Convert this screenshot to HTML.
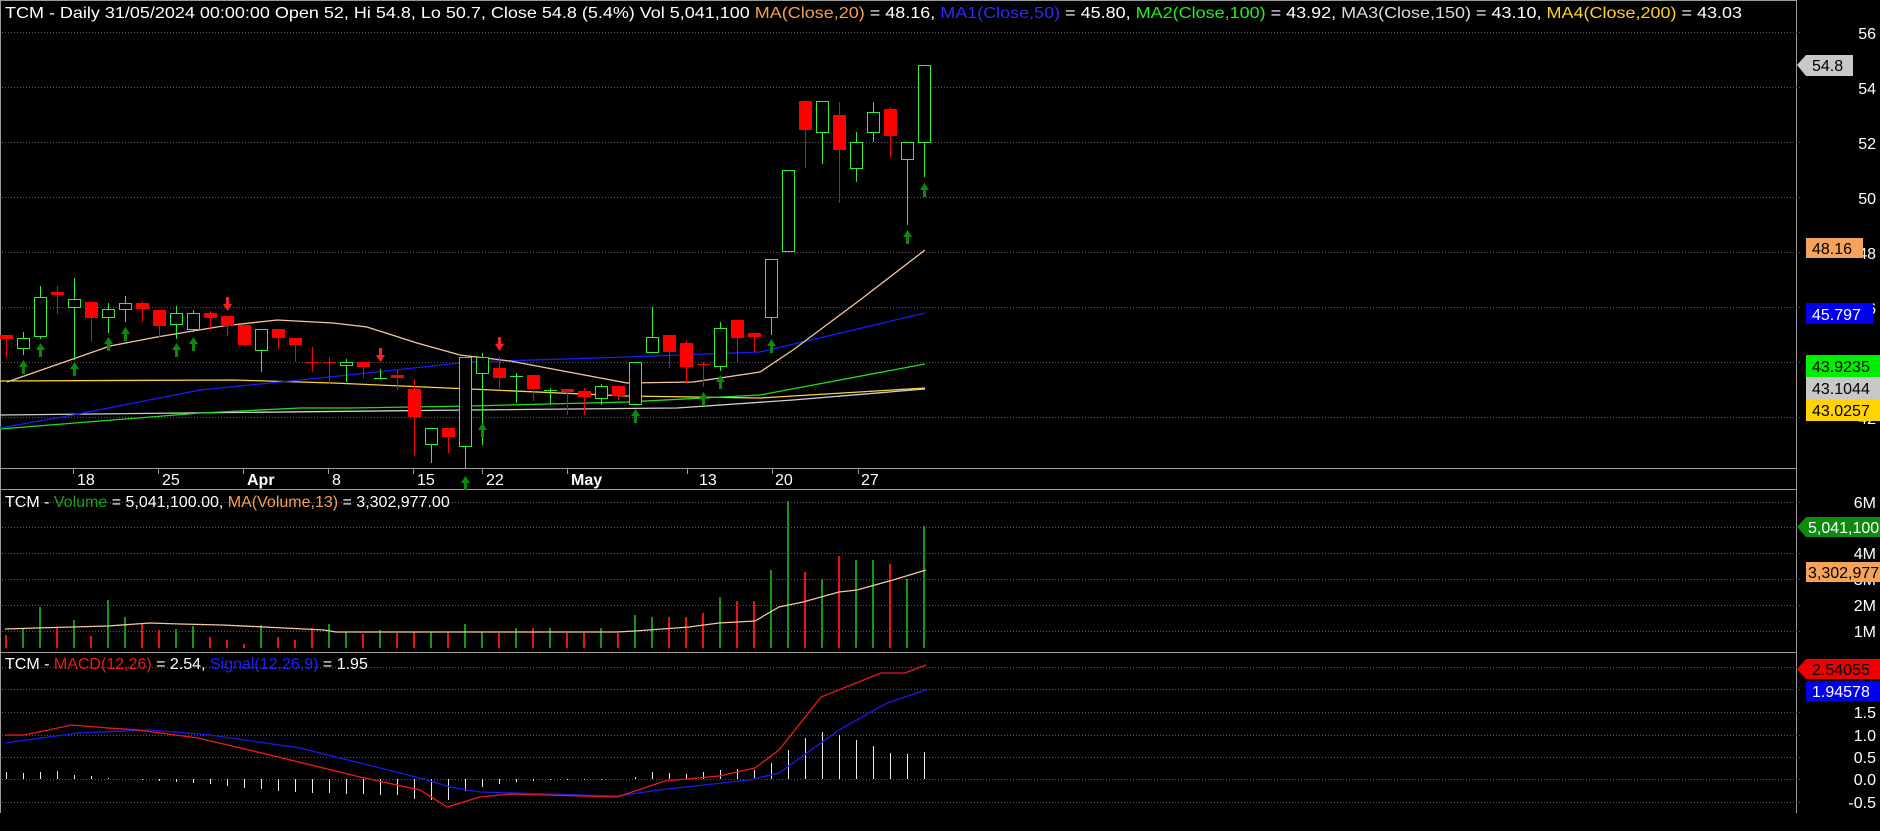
<!DOCTYPE html>
<html><head><meta charset="utf-8"><style>
html,body{margin:0;padding:0;background:#000;}
svg{display:block;font-family:"Liberation Sans",Arial,sans-serif;}
</style></head><body>
<svg width="1880" height="831" viewBox="0 0 1880 831" xmlns="http://www.w3.org/2000/svg">
<defs>
<path id="ua" d="M0,0 L4.5,7 L1.5,7 L1.5,14 L-1.5,14 L-1.5,7 L-4.5,7 Z" fill="#0a8a0a"/>
<path id="da" d="M0,14 L4.5,7 L1.5,7 L1.5,0 L-1.5,0 L-1.5,7 L-4.5,7 Z" fill="#ff2020"/>
</defs>
<rect width="1880" height="831" fill="#000"/>
<!-- borders -->
<g stroke="#9a9a9a" stroke-width="1" fill="none">
<line x1="0.5" y1="0" x2="0.5" y2="813"/>
<line x1="1796.5" y1="0" x2="1796.5" y2="813"/>
<line x1="0" y1="468.5" x2="1796" y2="468.5"/>
<line x1="0" y1="489.5" x2="1796" y2="489.5"/>
<line x1="0" y1="652.5" x2="1796" y2="652.5"/>
<line x1="0" y1="0.5" x2="1796" y2="0.5"/>
</g>
<!-- grid -->
<g stroke="#5a5a5a" stroke-width="1" stroke-dasharray="1,2">
<line x1="2" y1="32.5" x2="1800" y2="32.5"/><line x1="2" y1="87.5" x2="1800" y2="87.5"/>
<line x1="2" y1="142.5" x2="1800" y2="142.5"/><line x1="2" y1="197.5" x2="1800" y2="197.5"/>
<line x1="2" y1="252.5" x2="1800" y2="252.5"/><line x1="2" y1="307.5" x2="1800" y2="307.5"/>
<line x1="2" y1="362.5" x2="1800" y2="362.5"/><line x1="2" y1="417.5" x2="1800" y2="417.5"/>
<line x1="2" y1="502.5" x2="1800" y2="502.5"/><line x1="2" y1="527.5" x2="1800" y2="527.5"/>
<line x1="2" y1="553.5" x2="1800" y2="553.5"/><line x1="2" y1="579.5" x2="1800" y2="579.5"/>
<line x1="2" y1="605.5" x2="1800" y2="605.5"/><line x1="2" y1="631.5" x2="1800" y2="631.5"/>
<line x1="2" y1="667.5" x2="1800" y2="667.5"/><line x1="2" y1="689.5" x2="1800" y2="689.5"/>
<line x1="2" y1="712.5" x2="1800" y2="712.5"/><line x1="2" y1="735.5" x2="1800" y2="735.5"/>
<line x1="2" y1="757.5" x2="1800" y2="757.5"/><line x1="2" y1="779.5" x2="1800" y2="779.5"/>
<line x1="2" y1="802.5" x2="1800" y2="802.5"/>
</g>
<!-- MAs main -->
<g fill="none" stroke-width="1.3">
<polyline stroke="#ffd23a" points="0,381 233,380 333,383 470,389 627,396 760,398 925,388"/>
<polyline stroke="#cfcfcf" points="0,415 470,410 677,408 793,400 925,389"/>
<polyline stroke="#22dd22" points="0,429 200,413 300,408 350,408 470,406 627,402 760,395 925,364"/>
<polyline stroke="#1a1aff" points="0,428 73,415 200,390 300,380 367,373 470,362 627,357 760,352 925,313"/>
<polyline stroke="#f5c79a" points="7,382 73,359 110,346 157,337 223,326 277,320 333,323 367,327 417,343 460,355 510,361 627,383 693,382 760,372 793,350 860,300 925,250"/>
</g>
<!-- candles -->
<g stroke-width="1">
<g stroke="#ff0000" fill="#ff0000">
<line x1="6.5" y1="335" x2="6.5" y2="357"/><rect x="0.5" y="335.5" width="12" height="3"/>
<line x1="57.5" y1="286" x2="57.5" y2="314"/><rect x="51.5" y="292.5" width="12" height="2"/>
<line x1="91.5" y1="302" x2="91.5" y2="342"/><rect x="85.5" y="302.5" width="12" height="15"/>
<line x1="142.5" y1="301" x2="142.5" y2="322"/><rect x="136.5" y="303.5" width="12" height="5"/>
<line x1="159.5" y1="310" x2="159.5" y2="337"/><rect x="153.5" y="310.5" width="12" height="15"/>
<line x1="210.5" y1="311" x2="210.5" y2="330"/><rect x="204.5" y="313.5" width="12" height="4"/>
<line x1="227.5" y1="316" x2="227.5" y2="336"/><rect x="221.5" y="316.5" width="12" height="9"/>
<line x1="244.5" y1="325" x2="244.5" y2="346"/><rect x="238.5" y="325.5" width="12" height="19"/>
<line x1="278.5" y1="329" x2="278.5" y2="349"/><rect x="272.5" y="329.5" width="12" height="8"/>
<line x1="295.5" y1="338" x2="295.5" y2="362"/><rect x="289.5" y="338.5" width="12" height="6"/>
<line x1="312.5" y1="347" x2="312.5" y2="372"/><line x1="306" y1="362.5" x2="319" y2="362.5"/>
<line x1="329.5" y1="357" x2="329.5" y2="383"/><line x1="323" y1="362.5" x2="336" y2="362.5"/>
<line x1="363.5" y1="362" x2="363.5" y2="378"/><rect x="357.5" y="362.5" width="12" height="4"/>
<line x1="397.5" y1="370" x2="397.5" y2="390"/><rect x="391.5" y="375.5" width="12" height="2"/>
<line x1="414.5" y1="379" x2="414.5" y2="456"/><rect x="408.5" y="389.5" width="12" height="27"/>
<line x1="448.5" y1="428" x2="448.5" y2="453"/><rect x="442.5" y="428.5" width="12" height="8"/>
<line x1="499.5" y1="357" x2="499.5" y2="390"/><rect x="493.5" y="368.5" width="12" height="9"/>
<line x1="533.5" y1="375" x2="533.5" y2="401"/><rect x="527.5" y="375.5" width="12" height="13"/>
<line x1="567.5" y1="389" x2="567.5" y2="415"/><rect x="561.5" y="389.5" width="12" height="2"/>
<line x1="584.5" y1="388" x2="584.5" y2="415"/><rect x="578.5" y="391.5" width="12" height="5"/>
<line x1="618.5" y1="386" x2="618.5" y2="400"/><rect x="612.5" y="386.5" width="12" height="9"/>
<line x1="669.5" y1="335" x2="669.5" y2="368"/><rect x="663.5" y="335.5" width="12" height="16"/>
<line x1="686.5" y1="340" x2="686.5" y2="383"/><rect x="680.5" y="343.5" width="12" height="23"/>
<line x1="703.5" y1="362" x2="703.5" y2="387"/><line x1="697" y1="364.5" x2="710" y2="364.5"/>
<line x1="737.5" y1="320" x2="737.5" y2="362"/><rect x="731.5" y="320.5" width="12" height="17"/>
<line x1="754.5" y1="333" x2="754.5" y2="352"/><rect x="748.5" y="333.5" width="12" height="3"/>
<line x1="805.5" y1="101" x2="805.5" y2="168"/><rect x="799.5" y="101.5" width="12" height="28"/>
<line x1="839.5" y1="102" x2="839.5" y2="203"/><rect x="833.5" y="115.5" width="12" height="34"/>
<line x1="890.5" y1="107" x2="890.5" y2="157"/><rect x="884.5" y="109.5" width="12" height="26"/>
</g>
<g stroke="#33ee33" fill="#000">
<line x1="23.5" y1="332" x2="23.5" y2="355"/><rect x="17.5" y="338.5" width="12" height="10"/>
<line x1="40.5" y1="286" x2="40.5" y2="339"/><rect x="34.5" y="297.5" width="12" height="39"/>
<line x1="74.5" y1="278" x2="74.5" y2="360"/><rect x="68.5" y="299.5" width="12" height="8"/>
<line x1="108.5" y1="303" x2="108.5" y2="333"/><rect x="102.5" y="309.5" width="12" height="8"/>
<line x1="125.5" y1="296" x2="125.5" y2="322"/><rect x="119.5" y="303.5" width="12" height="6"/>
<line x1="176.5" y1="306" x2="176.5" y2="339"/><rect x="170.5" y="313.5" width="12" height="11"/>
<line x1="193.5" y1="310" x2="193.5" y2="332"/><rect x="187.5" y="313.5" width="12" height="16"/>
<line x1="261.5" y1="329" x2="261.5" y2="372"/><rect x="255.5" y="329.5" width="12" height="21"/>
<line x1="346.5" y1="359" x2="346.5" y2="382"/><rect x="340.5" y="362.5" width="12" height="3"/>
<line x1="380.5" y1="369" x2="380.5" y2="378"/><line x1="374" y1="378.5" x2="387" y2="378.5"/>
<line x1="431.5" y1="428" x2="431.5" y2="463"/><rect x="425.5" y="428.5" width="12" height="16"/>
<line x1="465.5" y1="357" x2="465.5" y2="468"/><rect x="459.5" y="357.5" width="12" height="89"/>
<line x1="482.5" y1="353" x2="482.5" y2="445"/><rect x="476.5" y="357.5" width="12" height="16"/>
<line x1="516.5" y1="373" x2="516.5" y2="403"/><line x1="510" y1="376.5" x2="523" y2="376.5"/>
<line x1="550.5" y1="388" x2="550.5" y2="404"/><line x1="544" y1="390.5" x2="557" y2="390.5"/>
<line x1="601.5" y1="384" x2="601.5" y2="405"/><rect x="595.5" y="386.5" width="12" height="12"/>
<rect x="629.5" y="362.5" width="12" height="42"/>
<line x1="652.5" y1="307" x2="652.5" y2="352"/><rect x="646.5" y="337.5" width="12" height="15"/>
<line x1="720.5" y1="322" x2="720.5" y2="371"/><rect x="714.5" y="328.5" width="12" height="38"/>
<line x1="771.5" y1="259" x2="771.5" y2="335"/><rect x="765.5" y="259.5" width="12" height="58"/>
<rect x="782.5" y="170.5" width="12" height="81"/>
<line x1="822.5" y1="101" x2="822.5" y2="164"/><rect x="816.5" y="101.5" width="12" height="31"/>
<line x1="856.5" y1="132" x2="856.5" y2="182"/><rect x="850.5" y="142.5" width="12" height="26"/>
<line x1="873.5" y1="102" x2="873.5" y2="142"/><rect x="867.5" y="112.5" width="12" height="20"/>
<line x1="907.5" y1="142" x2="907.5" y2="225"/><rect x="901.5" y="142.5" width="12" height="17"/>
<line x1="924.5" y1="65" x2="924.5" y2="177"/><rect x="918.5" y="65.5" width="12" height="77"/>
</g>
</g>
<!-- arrows -->
<use href="#ua" x="23.5" y="360"/><use href="#ua" x="40.5" y="343"/><use href="#ua" x="74.5" y="362"/>
<use href="#ua" x="108.5" y="337"/><use href="#ua" x="125.5" y="327"/><use href="#ua" x="176.5" y="343"/>
<use href="#ua" x="193.5" y="337"/><use href="#ua" x="465.5" y="476"/><use href="#ua" x="482.5" y="423"/>
<use href="#ua" x="635.5" y="409"/><use href="#ua" x="703.5" y="392"/><use href="#ua" x="720.5" y="375"/>
<use href="#ua" x="771.5" y="339"/><use href="#ua" x="907.5" y="230"/><use href="#ua" x="924.5" y="183"/>
<use href="#da" x="227.5" y="297"/><use href="#da" x="380.5" y="348"/><use href="#da" x="499.5" y="337"/>
<!-- header -->
<text x="5" y="18" font-size="16" fill="#fff" textLength="1737" lengthAdjust="spacingAndGlyphs">TCM - Daily 31/05/2024 00:00:00 Open 52, Hi 54.8, Lo 50.7, Close 54.8 (5.4%) Vol 5,041,100 <tspan fill="#f5a050">MA(Close,20)</tspan> = 48.16, <tspan fill="#2a2aff">MA1(Close,50)</tspan> = 45.80, <tspan fill="#22ee22">MA2(Close,100)</tspan> = 43.92, <tspan fill="#dddddd">MA3(Close,150)</tspan> = 43.10, <tspan fill="#ffd21e">MA4(Close,200)</tspan> = 43.03</text>
<!-- date axis -->
<g stroke="#9a9a9a"><line x1="73.5" y1="468" x2="73.5" y2="474"/><line x1="158.5" y1="468" x2="158.5" y2="474"/><line x1="243.5" y1="468" x2="243.5" y2="474"/><line x1="328.5" y1="468" x2="328.5" y2="474"/><line x1="413.5" y1="468" x2="413.5" y2="474"/><line x1="482.5" y1="468" x2="482.5" y2="474"/><line x1="567.5" y1="468" x2="567.5" y2="474"/><line x1="687.5" y1="468" x2="687.5" y2="474"/><line x1="772.5" y1="468" x2="772.5" y2="474"/><line x1="858.5" y1="468" x2="858.5" y2="474"/></g>
<g fill="#fff" font-size="16">
<text x="77" y="485">18</text><text x="162" y="485">25</text><text x="247" y="485" font-weight="bold">Apr</text><text x="332" y="485">8</text><text x="417" y="485">15</text><text x="486" y="485">22</text><text x="571" y="485" font-weight="bold">May</text><text x="699" y="485">13</text><text x="775" y="485">20</text><text x="861" y="485">27</text>
</g>
<!-- volume -->
<g stroke-width="2">
<g stroke="#ee1111">
<line x1="6" y1="648" x2="6" y2="635"/><line x1="57" y1="648" x2="57" y2="628"/><line x1="91" y1="648" x2="91" y2="636"/><line x1="142" y1="648" x2="142" y2="623"/><line x1="159" y1="648" x2="159" y2="630"/><line x1="210" y1="648" x2="210" y2="637"/><line x1="227" y1="648" x2="227" y2="640"/><line x1="244" y1="648" x2="244" y2="644"/><line x1="278" y1="648" x2="278" y2="637"/><line x1="295" y1="648" x2="295" y2="640"/><line x1="312" y1="648" x2="312" y2="628"/><line x1="363" y1="648" x2="363" y2="634"/><line x1="397" y1="648" x2="397" y2="633"/><line x1="414" y1="648" x2="414" y2="632"/><line x1="448" y1="648" x2="448" y2="632"/><line x1="499" y1="648" x2="499" y2="633"/><line x1="533" y1="648" x2="533" y2="628"/><line x1="567" y1="648" x2="567" y2="633"/><line x1="584" y1="648" x2="584" y2="633"/><line x1="618" y1="648" x2="618" y2="633"/><line x1="669" y1="648" x2="669" y2="617"/><line x1="686" y1="648" x2="686" y2="617"/><line x1="703" y1="648" x2="703" y2="613"/><line x1="737" y1="648" x2="737" y2="601"/><line x1="754" y1="648" x2="754" y2="601"/><line x1="805" y1="648" x2="805" y2="572"/><line x1="839" y1="648" x2="839" y2="556"/><line x1="890" y1="648" x2="890" y2="564"/>
</g>
<g stroke="#119911">
<line x1="23" y1="648" x2="23" y2="629"/><line x1="40" y1="648" x2="40" y2="607"/><line x1="74" y1="648" x2="74" y2="620"/><line x1="108" y1="648" x2="108" y2="600"/><line x1="125" y1="648" x2="125" y2="617"/><line x1="176" y1="648" x2="176" y2="629"/><line x1="193" y1="648" x2="193" y2="626"/><line x1="261" y1="648" x2="261" y2="625"/><line x1="329" y1="648" x2="329" y2="624"/><line x1="346" y1="648" x2="346" y2="632"/><line x1="380" y1="648" x2="380" y2="630"/><line x1="431" y1="648" x2="431" y2="632"/><line x1="465" y1="648" x2="465" y2="624"/><line x1="482" y1="648" x2="482" y2="632"/><line x1="516" y1="648" x2="516" y2="628"/><line x1="550" y1="648" x2="550" y2="628"/><line x1="601" y1="648" x2="601" y2="628"/><line x1="635" y1="648" x2="635" y2="615"/><line x1="652" y1="648" x2="652" y2="617"/><line x1="720" y1="648" x2="720" y2="597"/><line x1="771" y1="648" x2="771" y2="570"/><line x1="788" y1="648" x2="788" y2="501"/><line x1="822" y1="648" x2="822" y2="579"/><line x1="856" y1="648" x2="856" y2="560"/><line x1="873" y1="648" x2="873" y2="560"/><line x1="907" y1="648" x2="907" y2="579"/><line x1="924" y1="648" x2="924" y2="526"/>
</g>
</g>
<polyline fill="none" stroke="#f5c79a" stroke-width="1.3" points="5,629 36,628 108,626 150,623 180,624 222,625 264,627 324,630 336,632 617,632 635,631 689,627 719,623 755,621 779,607 803,602 839,592 857,590 893,580 926,570"/>
<text x="5" y="507" font-size="16" fill="#fff">TCM - <tspan fill="#1aa01a">Volume</tspan> = 5,041,100.00, <tspan fill="#f5a050">MA(Volume,13)</tspan> = 3,302,977.00</text>
<!-- MACD histogram -->
<g stroke="#e8e8e8" stroke-width="1">
<line x1="6.5" y1="779" x2="6.5" y2="772"/><line x1="23.5" y1="779" x2="23.5" y2="773"/><line x1="40.5" y1="779" x2="40.5" y2="772"/><line x1="57.5" y1="779" x2="57.5" y2="771"/><line x1="74.5" y1="779" x2="74.5" y2="775"/><line x1="91.5" y1="779" x2="91.5" y2="776"/><line x1="108.5" y1="779" x2="108.5" y2="778"/>
<line x1="142.5" y1="779" x2="142.5" y2="780"/><line x1="159.5" y1="779" x2="159.5" y2="781"/><line x1="176.5" y1="779" x2="176.5" y2="782"/><line x1="193.5" y1="779" x2="193.5" y2="783"/><line x1="210.5" y1="779" x2="210.5" y2="784"/><line x1="227.5" y1="779" x2="227.5" y2="786"/><line x1="244.5" y1="779" x2="244.5" y2="788"/><line x1="261.5" y1="779" x2="261.5" y2="789"/><line x1="278.5" y1="779" x2="278.5" y2="791"/><line x1="295.5" y1="779" x2="295.5" y2="792"/><line x1="312.5" y1="779" x2="312.5" y2="793"/><line x1="329.5" y1="779" x2="329.5" y2="793"/><line x1="346.5" y1="779" x2="346.5" y2="794"/><line x1="363.5" y1="779" x2="363.5" y2="794"/><line x1="380.5" y1="779" x2="380.5" y2="795"/><line x1="397.5" y1="779" x2="397.5" y2="795"/><line x1="414.5" y1="779" x2="414.5" y2="799"/><line x1="431.5" y1="779" x2="431.5" y2="800"/><line x1="448.5" y1="779" x2="448.5" y2="800"/><line x1="465.5" y1="779" x2="465.5" y2="791"/><line x1="482.5" y1="779" x2="482.5" y2="787"/><line x1="499.5" y1="779" x2="499.5" y2="784"/><line x1="516.5" y1="779" x2="516.5" y2="782"/><line x1="533.5" y1="779" x2="533.5" y2="781"/><line x1="550.5" y1="779" x2="550.5" y2="780"/><line x1="567.5" y1="779" x2="567.5" y2="780"/><line x1="584.5" y1="779" x2="584.5" y2="780"/><line x1="601.5" y1="779" x2="601.5" y2="780"/>
<line x1="635.5" y1="779" x2="635.5" y2="777"/><line x1="652.5" y1="779" x2="652.5" y2="772"/><line x1="669.5" y1="779" x2="669.5" y2="773"/><line x1="686.5" y1="779" x2="686.5" y2="774"/><line x1="703.5" y1="779" x2="703.5" y2="772"/><line x1="720.5" y1="779" x2="720.5" y2="770"/><line x1="737.5" y1="779" x2="737.5" y2="769"/><line x1="754.5" y1="779" x2="754.5" y2="770"/><line x1="771.5" y1="779" x2="771.5" y2="763"/><line x1="788.5" y1="779" x2="788.5" y2="750"/><line x1="805.5" y1="779" x2="805.5" y2="738"/><line x1="822.5" y1="779" x2="822.5" y2="732"/><line x1="839.5" y1="779" x2="839.5" y2="735"/><line x1="856.5" y1="779" x2="856.5" y2="740"/><line x1="873.5" y1="779" x2="873.5" y2="746"/><line x1="890.5" y1="779" x2="890.5" y2="753"/><line x1="907.5" y1="779" x2="907.5" y2="754"/><line x1="924.5" y1="779" x2="924.5" y2="752"/>
</g>
<polyline fill="none" stroke="#1a1aee" stroke-width="1.3" points="5,743 78,733 150,730 210,735 300,748 420,778 450,787 480,792 617,796 659,790 749,780 779,773 839,730 887,703 926,690"/>
<polyline fill="none" stroke="#ee1a1a" stroke-width="1.3" points="5,735 24,735 72,725 108,728 138,730 198,738 270,755 360,777 420,790 447,807 480,797 510,794 617,797 665,781 719,776 755,768 779,750 821,697 881,673 905,673 926,665"/>
<text x="5" y="669" font-size="16" fill="#fff">TCM - <tspan fill="#ee1a1a">MACD(12,26)</tspan> = 2.54, <tspan fill="#2020ff">Signal(12,26,9)</tspan> = 1.95</text>
<!-- right axis labels -->
<g fill="#fff" font-size="16" text-anchor="end">
<text x="1876" y="39">56</text><text x="1876" y="94">54</text><text x="1876" y="149">52</text><text x="1876" y="204">50</text><text x="1876" y="259">48</text><text x="1876" y="314">46</text><text x="1876" y="424">42</text>
<text x="1876" y="508">6M</text><text x="1876" y="559">4M</text><text x="1876" y="585">3M</text><text x="1876" y="611">2M</text><text x="1876" y="637">1M</text>
<text x="1876" y="718">1.5</text><text x="1876" y="741">1.0</text><text x="1876" y="763">0.5</text><text x="1876" y="785">0.0</text><text x="1876" y="808">-0.5</text>
</g>
<!-- value boxes -->
<path d="M1797,65 L1806,55 L1853,55 L1853,76 L1806,76 Z" fill="#c8c8c8"/>
<text x="1812" y="71" font-size="16" fill="#000">54.8</text>
<rect x="1806" y="238" width="57" height="20" fill="#f5a25a"/><text x="1812" y="254" font-size="16" fill="#000">48.16</text>
<rect x="1806" y="303" width="67" height="21" fill="#0000ee"/><text x="1812" y="320" font-size="16" fill="#fff">45.797</text>
<rect x="1806" y="355" width="74" height="22" fill="#00ee00"/><text x="1812" y="372" font-size="16" fill="#000">43.9235</text>
<rect x="1806" y="377" width="74" height="22" fill="#c8c8c8"/><text x="1812" y="394" font-size="16" fill="#000">43.1044</text>
<rect x="1806" y="399" width="74" height="22" fill="#ffd400"/><text x="1812" y="416" font-size="16" fill="#000">43.0257</text>
<path d="M1797,527 L1806,517 L1880,517 L1880,537 L1806,537 Z" fill="#0e8a0e"/>
<text x="1808" y="533" font-size="16" fill="#fff">5,041,100</text>
<rect x="1806" y="562" width="74" height="20" fill="#f5a25a"/><text x="1808" y="578" font-size="16" fill="#000">3,302,977</text>
<path d="M1797,669 L1806,659 L1880,659 L1880,679 L1806,679 Z" fill="#ee0000"/>
<text x="1812" y="675" font-size="16" fill="#000">2.54055</text>
<rect x="1806" y="681" width="74" height="20" fill="#0000ee"/><text x="1812" y="697" font-size="16" fill="#fff">1.94578</text>
</svg>
</body></html>
